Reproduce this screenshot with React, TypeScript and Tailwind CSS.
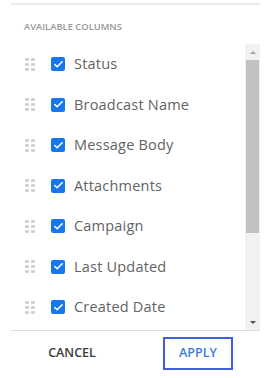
import { Check } from 'lucide-react';

const columns = [
  'Status',
  'Broadcast Name',
  'Message Body',
  'Attachments',
  'Campaign',
  'Last Updated',
  'Created Date',
];

function Handle() {
  return (
    <div className="grid grid-cols-2 gap-x-[2px] gap-y-[2px] w-[10px]">
      {Array.from({ length: 6 }).map((_, i) => (
        <span key={i} className="w-[4px] h-[3px] rounded-[1px] bg-[#d2d2d2]" />
      ))}
    </div>
  );
}

export default function App() {
  return (
    <div className="w-[271px] h-[378px] bg-white font-['Open_Sans',sans-serif] pt-[3px] px-[11px]">
      <div className="border-t-2 border-[#ececec] h-full flex flex-col">
        <div className="h-[39px] flex items-center pl-[13px] pt-[6px]">
          <span className="text-[9.4px] font-semibold text-[#979797]">AVAILABLE COLUMNS</span>
        </div>

        <div className="flex h-[286px]">
          <div className="flex-1 overflow-hidden">
            {columns.map((c) => (
              <div key={c} className="h-[40.5px] flex items-center pl-[14px]">
                <Handle />
                <span className="ml-[16px] w-[14px] h-[14px] rounded-[2px] bg-[#1677ee] flex items-center justify-center">
                  <Check size={11} strokeWidth={3.5} className="text-white" />
                </span>
                <span className="ml-[9px] text-[14.5px] text-[#636363] tracking-[0.2px]">{c}</span>
              </div>
            ))}
          </div>
          <div className="w-[15px] bg-[#f1f1f1] flex flex-col items-center">
            <div className="h-[16px] flex items-center justify-center">
              <span className="w-0 h-0 border-x-[3px] border-x-transparent border-b-[3px] border-b-[#a3a3a3]" />
            </div>
            <div className="w-[13px] h-[173px] bg-[#c1c1c1]" />
            <div className="flex-1" />
            <div className="h-[16px] flex items-center justify-center">
              <span className="w-0 h-0 border-x-[3px] border-x-transparent border-t-[3px] border-t-[#505050]" />
            </div>
          </div>
        </div>

        <div className="border-t border-[#dcdcdc] flex items-start pt-[6px]">
          <div className="w-[122px] h-[33px] flex items-center justify-center">
            <span className="text-[12.5px] font-semibold text-[#3c3c3c]">CANCEL</span>
          </div>
          <div className="ml-[30px] w-[70px] h-[33px] border-2 border-[#3f5fe0] flex items-center justify-center">
            <span className="text-[12.5px] font-semibold text-[#3d7bd8]">APPLY</span>
          </div>
        </div>
      </div>
    </div>
  );
}
